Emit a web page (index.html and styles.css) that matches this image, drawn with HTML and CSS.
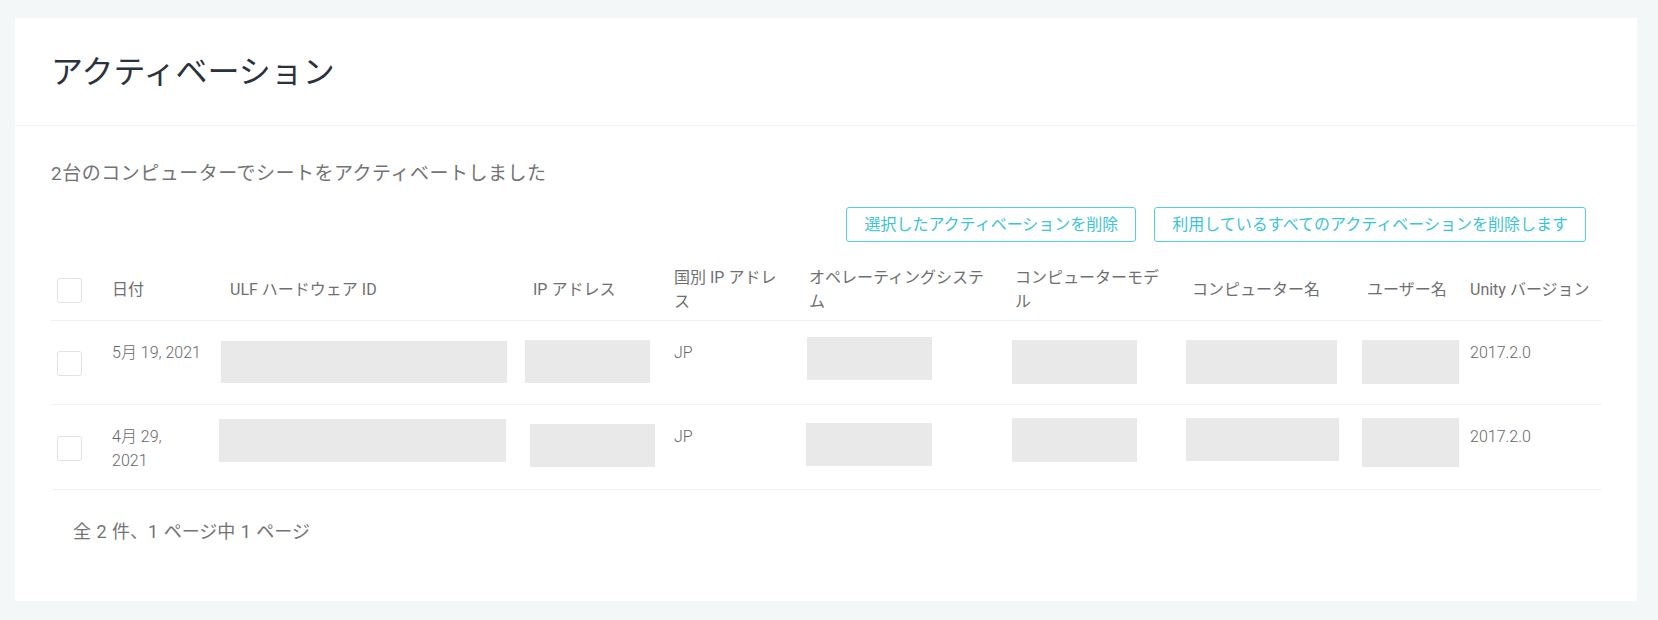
FILE: index.html
```html
<!DOCTYPE html>
<html lang="ja">
<head>
<meta charset="utf-8">
<title>アクティベーション</title>
<link rel="stylesheet" href="styles.css">
</head>
<body>
<div class="page">
  <section class="card">
    <header class="card-header">
      <h1 class="title">アクティベーション</h1>
    </header>
    <div class="card-body">
      <p class="summary">2台のコンピューターでシートをアクティベートしました</p>
      <div class="actions">
        <button class="btn" type="button">選択したアクティベーションを削除</button>
        <button class="btn" type="button">利用しているすべてのアクティベーションを削除します</button>
      </div>
      <table class="grid">
        <colgroup>
          <col class="c-check"><col class="c-date"><col class="c-ulf"><col class="c-ip"><col class="c-country"><col class="c-os"><col class="c-model"><col class="c-name"><col class="c-user"><col class="c-unity">
        </colgroup>
        <thead>
          <tr>
            <th class="cell-check"><span class="checkbox"></span></th>
            <th>日付</th>
            <th>ULF ハードウェア ID</th>
            <th>IP アドレス</th>
            <th>国別 IP アドレス</th>
            <th>オペレーティングシステム</th>
            <th>コンピューターモデル</th>
            <th>コンピューター名</th>
            <th class="cell-user">ユーザー名</th>
            <th class="cell-last">Unity バージョン</th>
          </tr>
        </thead>
        <tbody>
          <tr>
            <td class="cell-check"><span class="checkbox"></span></td>
            <td>5月 19, 2021</td>
            <td><div class="redact" style="--x:-9px;--y:0px;--w:286px;--h:42px"></div></td>
            <td><div class="redact" style="--x:-8px;--y:-1px;--w:125px;--h:43px"></div></td>
            <td>JP</td>
            <td><div class="redact" style="--x:-2px;--y:-4px;--w:125px;--h:43px"></div></td>
            <td><div class="redact" style="--x:-3px;--y:-1px;--w:125px;--h:44px"></div></td>
            <td><div class="redact" style="--x:-6px;--y:-1px;--w:151px;--h:44px"></div></td>
            <td class="cell-user"><div class="redact" style="--x:-5px;--y:-1px;--w:97px;--h:44px"></div></td>
            <td class="cell-last">2017.2.0</td>
          </tr>
          <tr>
            <td class="cell-check"><span class="checkbox"></span></td>
            <td>4月 29,<br>2021</td>
            <td><div class="redact" style="--x:-11px;--y:-6px;--w:287px;--h:43px"></div></td>
            <td><div class="redact" style="--x:-3px;--y:-1px;--w:125px;--h:43px"></div></td>
            <td>JP</td>
            <td><div class="redact" style="--x:-3px;--y:-2px;--w:126px;--h:43px"></div></td>
            <td><div class="redact" style="--x:-3px;--y:-7px;--w:125px;--h:44px"></div></td>
            <td><div class="redact" style="--x:-6px;--y:-7px;--w:153px;--h:43px"></div></td>
            <td class="cell-user"><div class="redact" style="--x:-5px;--y:-7px;--w:97px;--h:49px"></div></td>
            <td class="cell-last">2017.2.0</td>
          </tr>
        </tbody>
      </table>
      <p class="pager">全 2 件、1 ページ中 1 ページ</p>
    </div>
  </section>
</div>
</body>
</html>
```
FILE: styles.css
```css
* { box-sizing: border-box; }

html, body {
  margin: 0;
  padding: 0;
  background: #f4f7f8;
}

body {
  font-family: Roboto, "Noto Sans CJK JP", sans-serif;
  color: #6b6b6b;
  font-size: 16px;
}

.page {
  padding: 18px 21px 21px 15px;
}

.card {
  background: #ffffff;
}

.card-header {
  padding: 34px 36px 33px;
  border-bottom: 1px solid #f0f2f4;
}

.title {
  margin: 0;
  font-size: 32px;
  line-height: 40px;
  font-weight: 400;
  color: #2a333d;
}

.card-body {
  padding: 34px 35px 56px 36px;
}

.summary {
  margin: 0;
  font-size: 19px;
  line-height: 28px;
  letter-spacing: 0.5px;
  color: #737373;
}

.actions {
  display: flex;
  justify-content: flex-end;
  gap: 18px;
  margin-top: 19px;
  padding-right: 16px;
}

.btn {
  font-family: inherit;
  font-size: 16px;
  line-height: 21px;
  padding: 6px 17px;
  background: #ffffff;
  color: #3cc3d8;
  border: 1px solid #55cfe0;
  border-radius: 3px;
  cursor: pointer;
}

.grid {
  width: 100%;
  margin-top: 18px;
  border-collapse: collapse;
  table-layout: fixed;
}

.c-check { width: 55px; }
.c-date { width: 118px; }
.c-ulf { width: 303px; }
.c-ip { width: 141px; }
.c-country { width: 135px; }
.c-os { width: 206px; }
.c-model { width: 177px; }
.c-name { width: 175px; }
.c-user { width: 103px; }
.c-unity { width: 138px; }

.grid th {
  font-weight: 400;
  text-align: left;
  color: #6f6f6f;
  font-size: 16px;
  line-height: 24px;
  padding: 6px 16px 6px 6px;
  vertical-align: middle;
  border-bottom: 1px solid #f0f2f3;
}

.grid td {
  font-size: 16px;
  line-height: 24px;
  font-weight: 300;
  color: #666666;
  padding: 20px 16px 16px 6px;
  height: 84px;
  vertical-align: top;
  border-bottom: 1px solid #f0f2f3;
}

.grid .cell-check {
  vertical-align: middle;
  padding-top: 0;
  padding-bottom: 0;
}

.grid td.cell-check {
  padding-top: 2px;
}

.grid .cell-user { padding-right: 10px; }
.grid .cell-last { padding-right: 6px; }

.checkbox {
  display: block;
  width: 25px;
  height: 25px;
  border: 1px solid #dfe3e6;
  border-radius: 3px;
  background: #ffffff;
}

.redact {
  margin-left: var(--x);
  margin-top: var(--y);
  width: var(--w);
  height: var(--h);
  background: #e9e9e9;
}

.pager {
  margin: 29px 0 0 22px;
  font-size: 18px;
  line-height: 26px;
  word-spacing: 1px;
  color: #737373;
}
```
